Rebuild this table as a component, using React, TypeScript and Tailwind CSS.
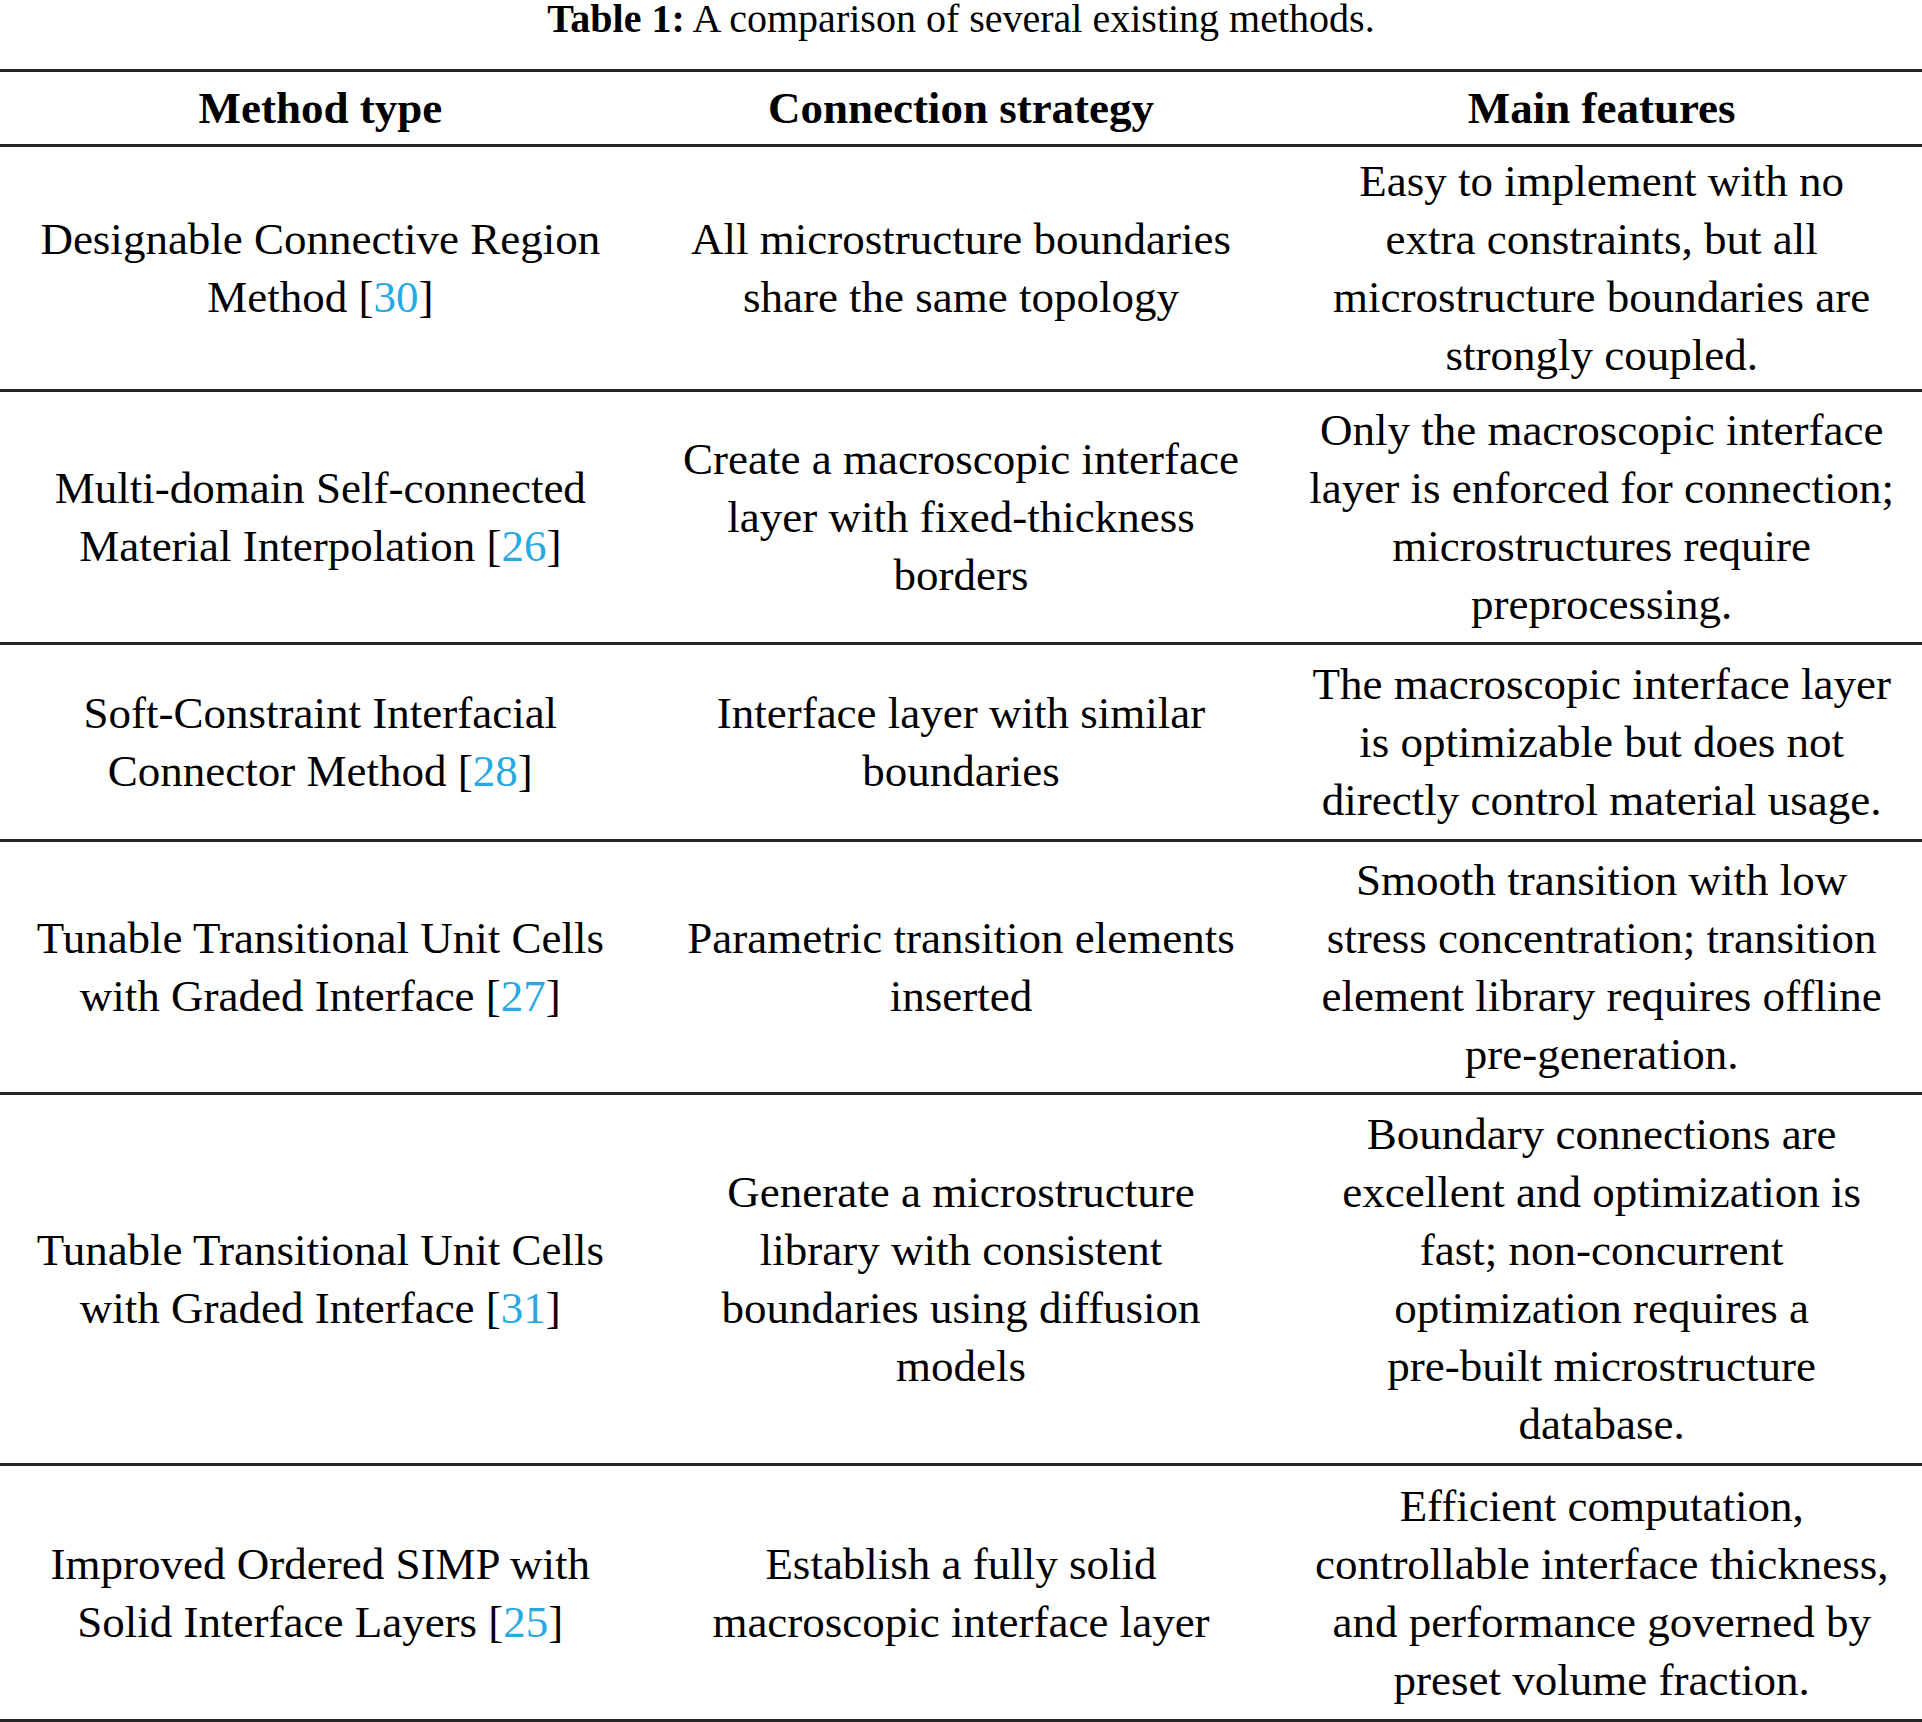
import React from 'react';

type Cell = (string | { cite: string; text: string })[];

const Cite: React.FC<{ text: string; cite: string }> = ({ text, cite }) => (
  <>
    {text} [<span className="text-[#29a9e1]">{cite}</span>]
  </>
);

const rows: { h: string; cols: Cell[] }[] = [
  {
    h: 'h-[242px]',
    cols: [
      ['Designable Connective Region', { text: 'Method', cite: '30' }],
      ['All microstructure boundaries', 'share the same topology'],
      ['Easy to implement with no', 'extra constraints, but all', 'microstructure boundaries are', 'strongly coupled.'],
    ],
  },
  {
    h: 'h-[250px]',
    cols: [
      ['Multi-domain Self-connected', { text: 'Material Interpolation', cite: '26' }],
      ['Create a macroscopic interface', 'layer with fixed-thickness', 'borders'],
      ['Only the macroscopic interface', 'layer is enforced for connection;', 'microstructures require', 'preprocessing.'],
    ],
  },
  {
    h: 'h-[194px]',
    cols: [
      ['Soft-Constraint Interfacial', { text: 'Connector Method', cite: '28' }],
      ['Interface layer with similar', 'boundaries'],
      ['The macroscopic interface layer', 'is optimizable but does not', 'directly control material usage.'],
    ],
  },
  {
    h: 'h-[250px]',
    cols: [
      ['Tunable Transitional Unit Cells', { text: 'with Graded Interface', cite: '27' }],
      ['Parametric transition elements', 'inserted'],
      ['Smooth transition with low', 'stress concentration; transition', 'element library requires offline', 'pre-generation.'],
    ],
  },
  {
    h: 'h-[368px]',
    cols: [
      ['Tunable Transitional Unit Cells', { text: 'with Graded Interface', cite: '31' }],
      ['Generate a microstructure', 'library with consistent', 'boundaries using diffusion', 'models'],
      [
        'Boundary connections are',
        'excellent and optimization is',
        'fast; non-concurrent',
        'optimization requires a',
        'pre-built microstructure',
        'database.',
      ],
    ],
  },
  {
    h: 'h-[253px]',
    cols: [
      ['Improved Ordered SIMP with', { text: 'Solid Interface Layers', cite: '25' }],
      ['Establish a fully solid', 'macroscopic interface layer'],
      ['Efficient computation,', 'controllable interface thickness,', 'and performance governed by', 'preset volume fraction.'],
    ],
  },
];

const Rule = () => <div className="h-[3px] bg-[#262626]" />;

const App: React.FC = () => {
  return (
    <div className="w-[1922px] h-[1722px] bg-white text-black font-['Liberation_Serif',serif] overflow-hidden">
      {/* Caption */}
      <div className="h-[69px] text-center text-[40px] leading-[37px] whitespace-nowrap">
        <span className="font-bold">Table 1:</span> A comparison of several existing methods.
      </div>

      <Rule />
      <div className="grid grid-cols-3 h-[72px] items-center text-center text-[45px] leading-[58px] font-bold">
        <div>Method type</div>
        <div>Connection strategy</div>
        <div>Main features</div>
      </div>
      <Rule />

      {rows.map((row, i) => (
        <React.Fragment key={i}>
          <div className={`grid grid-cols-3 items-center text-center text-[45px] leading-[58px] ${row.h}`}>
            {row.cols.map((cell, j) => (
              <div key={j} className="flex flex-col items-center">
                {cell.map((line, k) => (
                  <div key={k} className="whitespace-nowrap">
                    {typeof line === 'string' ? line : <Cite text={line.text} cite={line.cite} />}
                  </div>
                ))}
              </div>
            ))}
          </div>
          <Rule />
        </React.Fragment>
      ))}
    </div>
  );
};

export default App;
